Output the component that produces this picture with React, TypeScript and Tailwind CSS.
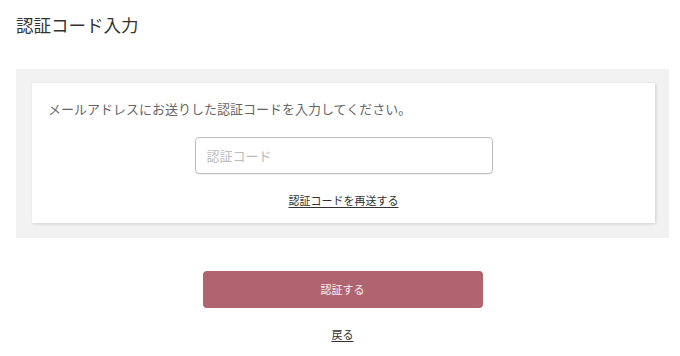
import React from "react";

export default function App() {
  const font = { fontFamily: '"Noto Sans CJK JP", "Noto Sans", sans-serif' };
  return (
    <div className="w-[680px] h-[356px] bg-white overflow-hidden text-[#333]" style={font}>
      <div className="pt-[13px] pl-[16px] text-[17.5px] leading-[24px] text-[#333]">認証コード入力</div>
      <div className="ml-[16px] w-[653px] mt-[32px]">
        <div className="bg-[#f2f2f2] pl-[16px] pr-[14px] pt-[14px] pb-[15px]">
          <div className="bg-white shadow-[1px_1px_3px_rgba(0,0,0,0.15)] pt-[16px] pb-[15px] px-[16px] flex flex-col">
            <div className="text-[13px] leading-[20px] text-[#666]">
              メールアドレスにお送りした認証コードを入力してください。
            </div>
            <div className="flex justify-center mt-[18px]">
              <input
                placeholder="認証コード"
                className="w-[298px] h-[37px] border border-[#bdbdbd] rounded-[4px] px-[11px] text-[13px] text-[#333] placeholder:text-[#bbb] outline-none shadow-[0_1px_1px_rgba(0,0,0,0.06)]"
                style={font}
              />
            </div>
            <div className="flex justify-center mt-[18px]">
              <a className="text-[11px] leading-[16px] text-[#333] underline underline-offset-2 cursor-pointer">
                認証コードを再送する
              </a>
            </div>
          </div>
        </div>
        <div className="flex justify-center mt-[33px]">
          <button className="w-[280px] h-[37px] rounded-[4px] bg-[#b06470] text-white/90 text-[11px]" style={font}>
            認証する
          </button>
        </div>
        <div className="flex justify-center mt-[18px]">
          <a className="text-[11px] leading-[16px] text-[#333] underline underline-offset-2 cursor-pointer">戻る</a>
        </div>
      </div>
    </div>
  );
}
